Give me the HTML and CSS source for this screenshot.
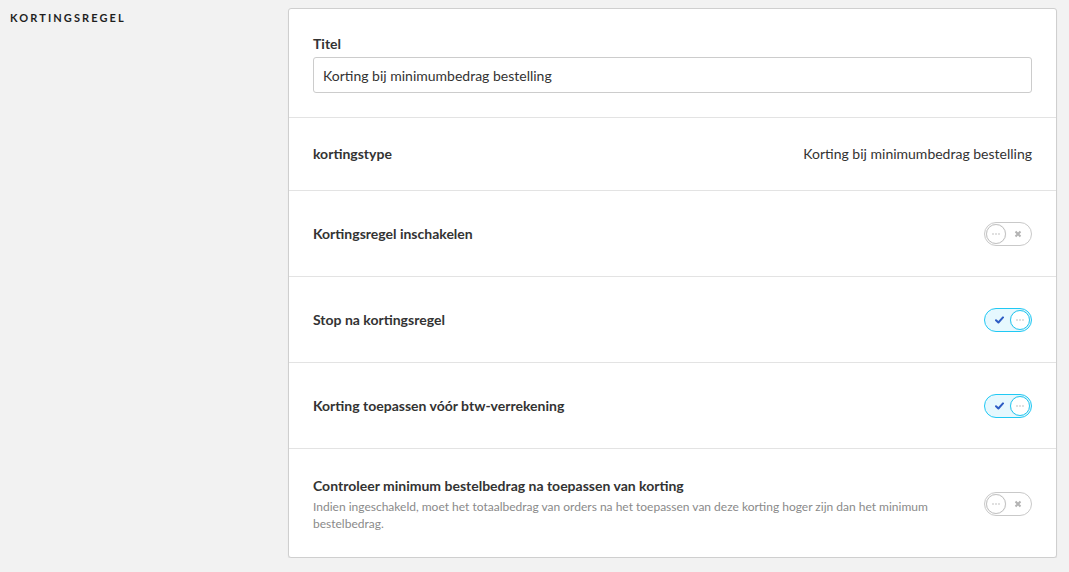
FILE: index.html
```html
<!DOCTYPE html>
<html lang="nl">
<head>
<meta charset="utf-8">
<title>Kortingsregel</title>
<link rel="stylesheet" href="styles.css">
</head>
<body>
<div class="page">
  <aside class="side">
    <h2 class="side-title">KORTINGSREGEL</h2>
  </aside>
  <section class="card">
    <div class="section title-section">
      <label class="field-label" for="titel">Titel</label>
      <input id="titel" class="text-input" type="text" value="Korting bij minimumbedrag bestelling">
    </div>
    <div class="section row row-info">
      <span class="row-label">kortingstype</span>
      <span class="row-value">Korting bij minimumbedrag bestelling</span>
    </div>
    <div class="section row row-toggle">
      <span class="row-label">Kortingsregel inschakelen</span>
      <span class="toggle off">
        <span class="knob"><svg width="10" height="2" viewBox="0 0 10 2"><circle cx="2" cy="1" r="0.8"/><circle cx="5" cy="1" r="0.8"/><circle cx="8" cy="1" r="0.8"/></svg></span>
        <span class="toggle-icon"><svg width="8" height="8" viewBox="0 0 8 8"><path d="M1.5 1.5 L6.5 6.5 M6.5 1.5 L1.5 6.5"/></svg></span>
      </span>
    </div>
    <div class="section row row-toggle">
      <span class="row-label">Stop na kortingsregel</span>
      <span class="toggle on">
        <span class="toggle-icon"><svg width="9" height="8" viewBox="0 0 9 8"><path d="M1 4.2 L3.4 6.5 L8 1.4"/></svg></span>
        <span class="knob"><svg width="10" height="2" viewBox="0 0 10 2"><circle cx="2" cy="1" r="0.8"/><circle cx="5" cy="1" r="0.8"/><circle cx="8" cy="1" r="0.8"/></svg></span>
      </span>
    </div>
    <div class="section row row-toggle">
      <span class="row-label">Korting toepassen vóór btw-verrekening</span>
      <span class="toggle on">
        <span class="toggle-icon"><svg width="9" height="8" viewBox="0 0 9 8"><path d="M1 4.2 L3.4 6.5 L8 1.4"/></svg></span>
        <span class="knob"><svg width="10" height="2" viewBox="0 0 10 2"><circle cx="2" cy="1" r="0.8"/><circle cx="5" cy="1" r="0.8"/><circle cx="8" cy="1" r="0.8"/></svg></span>
      </span>
    </div>
    <div class="section row row-desc">
      <div class="row-text">
        <span class="row-label">Controleer minimum bestelbedrag na toepassen van korting</span>
        <p class="row-help">Indien ingeschakeld, moet het totaalbedrag van orders na het toepassen van deze korting hoger zijn dan het minimum bestelbedrag.</p>
      </div>
      <span class="toggle off">
        <span class="knob"><svg width="10" height="2" viewBox="0 0 10 2"><circle cx="2" cy="1" r="0.8"/><circle cx="5" cy="1" r="0.8"/><circle cx="8" cy="1" r="0.8"/></svg></span>
        <span class="toggle-icon"><svg width="8" height="8" viewBox="0 0 8 8"><path d="M1.5 1.5 L6.5 6.5 M6.5 1.5 L1.5 6.5"/></svg></span>
      </span>
    </div>
  </section>
</div>
</body>
</html>
```

FILE: styles.css
```css
* { box-sizing: border-box; }

html, body {
  margin: 0;
  padding: 0;
  background: #f2f2f2;
  font-family: Lato, "Open Sans", "Liberation Sans", sans-serif;
  color: #333;
}

.page {
  display: flex;
  align-items: flex-start;
  padding-top: 8px;
  width: 1069px;
}

.side {
  width: 288px;
  flex: none;
  padding-left: 10px;
}

.side-title {
  margin: 3px 0 0;
  font-size: 11px;
  font-weight: 700;
  letter-spacing: 2.1px;
  color: #1f1f1f;
  line-height: 13px;
}

.card {
  width: 769px;
  flex: none;
  background: #fff;
  border: 1px solid #cfcfcf;
  border-radius: 3px;
  box-shadow: 0 1px 1px rgba(0,0,0,0.08);
}

.section {
  border-top: 1px solid #e3e3e3;
  padding: 0 24px;
}
.section:first-child { border-top: none; }

.title-section {
  padding-top: 25px;
  padding-bottom: 24px;
}

.field-label {
  display: block;
  font-size: 14px;
  font-weight: 700;
  line-height: 20px;
  color: #333;
  margin-bottom: 3px;
}

.text-input {
  display: block;
  width: 100%;
  height: 36px;
  border: 1px solid #ccc;
  border-radius: 3px;
  padding: 0 9px;
  font-family: inherit;
  font-size: 14px;
  color: #333;
  background: #fff;
  outline: none;
}

.row {
  display: flex;
  align-items: center;
  justify-content: space-between;
}

.row-info {
  height: 73px;
}

.row-toggle {
  height: 86px;
}

.row-desc {
  padding-top: 26px;
  padding-bottom: 25px;
}

.row-label {
  font-size: 14px;
  font-weight: 700;
  line-height: 20px;
  color: #333;
}

.row-value {
  font-size: 14px;
  line-height: 20px;
  color: #333;
}

.row-text {
  max-width: 640px;
}

.row-help {
  margin: 2px 0 0;
  font-size: 12px;
  line-height: 17px;
  color: #8a8a8a;
}

.toggle {
  flex: none;
  display: flex;
  align-items: center;
  justify-content: space-between;
  width: 48px;
  height: 24px;
  border-radius: 12px;
  padding: 0 1px;
}

.toggle.off {
  border: 1px solid #c9c9c9;
  background: #fff;
  padding-right: 9px;
}

.toggle.on {
  border: 1.5px solid #20c9f4;
  background: #e6f8fe;
  padding-left: 10px;
}

.knob {
  display: flex;
  align-items: center;
  justify-content: center;
  width: 20px;
  height: 20px;
  border-radius: 50%;
  background: #fff;
  border: 1px solid #c2c2c2;
  box-shadow: 0 0 1px rgba(0,0,0,0.15);
}

.knob svg circle { fill: #b8b8b8; }

.toggle.on .knob {
  border: 1.5px solid #20c9f4;
}

.toggle-icon {
  display: flex;
  align-items: center;
}

.toggle.off .toggle-icon path {
  stroke: #b3b3b3;
  stroke-width: 2;
  fill: none;
}

.toggle.on .toggle-icon path {
  stroke: #2d5cc4;
  stroke-width: 2;
  fill: none;
  stroke-linecap: round;
  stroke-linejoin: round;
}
```
